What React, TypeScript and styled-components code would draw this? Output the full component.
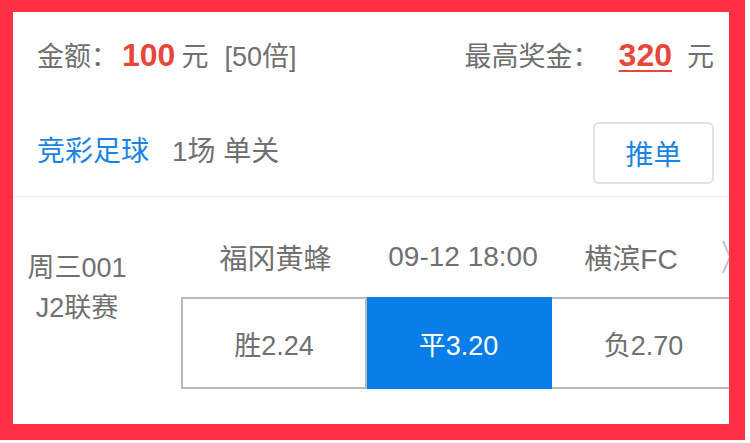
import styled, { createGlobalStyle } from "styled-components"

const GlobalStyle = createGlobalStyle`
    html, body {
        margin: 0;
        padding: 0;
        background: #f9f9f9;
    }
    body {
        font-family: "Liberation Sans", "Noto Sans CJK SC", sans-serif;
        color: #707070;
    }
`

const Frame = styled.div`
    box-sizing: border-box;
    width: 745px;
    height: 440px;
    border-style: solid;
    border-color: #ff2f44;
    border-width: 12px 16px 16px 13px;
    background: #fff;
    overflow: hidden;
`

const Card = styled.div`
    width: 716px;
    height: 412px;
    overflow: hidden;
    display: flex;
    flex-direction: column;
`

const SumRow = styled.div`
    box-sizing: border-box;
    height: 90px;
    flex: none;
    display: flex;
    align-items: center;
    justify-content: space-between;
    padding: 0 15px 6px 24px;
    font-size: 27px;
`

const Group = styled.div`
    display: flex;
    align-items: baseline;
    white-space: nowrap;
`

const Money = styled.span<{ $underline?: boolean }>`
    font-size: 32px;
    color: #e8463b;
    font-weight: 700;
    text-decoration: ${p => (p.$underline ? "underline" : "none")};
    text-underline-offset: 4px;
    text-decoration-thickness: 2px;
`

const Gap = styled.span<{ $w: number }>`
    display: inline-block;
    width: ${p => p.$w}px;
`

const TypeRow = styled.div`
    height: 94px;
    flex: none;
    display: flex;
    align-items: center;
    padding: 0 15px 0 24px;
    border-bottom: 1px solid #ececec;
    font-size: 28px;
`

const GameType = styled.span`
    color: #1c84e0;
`

const PlayType = styled.span`
    margin-left: 23px;
    flex: 1;
`

const PushButton = styled.button`
    box-sizing: border-box;
    width: 121px;
    height: 62px;
    margin-top: 8px;
    border: 2px solid #e2e2e2;
    border-radius: 6px;
    background: #fff;
    color: #1c84e0;
    font-family: inherit;
    font-size: 28px;
    padding: 0;
`

const MatchRow = styled.div`
    flex: 1;
    display: flex;
`

const MatchInfo = styled.div`
    width: 128px;
    flex: none;
    padding-top: 51px;
    text-align: center;
    font-size: 27px;
    line-height: 40px;
`

const MatchBody = styled.div`
    margin-left: 40px;
    padding-top: 40px;
    display: flex;
    flex-direction: column;
    gap: 20px;
`

const Teams = styled.div`
    display: grid;
    grid-template-columns: 189px 186px 150px auto;
    align-items: center;
    height: 40px;
    font-size: 28px;
    white-space: nowrap;
`

const Team = styled.span`
    text-align: center;
`

const Chevron = styled.svg`
    margin-left: 16px;
    display: block;
`

const Odds = styled.div`
    display: flex;
`

const OddsCell = styled.div<{ $active?: boolean; $first?: boolean }>`
    box-sizing: border-box;
    width: ${p => (p.$first ? 186 : 185)}px;
    height: 92px;
    flex: none;
    display: flex;
    align-items: center;
    justify-content: center;
    font-size: 27px;
    border: 2px solid ${p => (p.$active ? "#0a7ee8" : "#b9b9b9")};
    border-left-width: ${p => (p.$first ? 2 : 0)}px;
    background: ${p => (p.$active ? "#0a7ee8" : "#fff")};
    color: ${p => (p.$active ? "#fff" : "#707070")};
`

const odds = [
    { label: "胜2.24", active: false },
    { label: "平3.20", active: true },
    { label: "负2.70", active: false },
]

export default function App() {
    return (
        <>
            <GlobalStyle />
            <Frame>
                <Card>
                    <SumRow>
                        <Group>
                            <span>金额：</span>
                            <Gap $w={4} />
                            <Money>100</Money>
                            <Gap $w={6} />
                            <span>元</span>
                            <Gap $w={16} />
                            <span>[50倍]</span>
                        </Group>
                        <Group>
                            <span>最高奖金：</span>
                            <Gap $w={19} />
                            <Money $underline>320</Money>
                            <Gap $w={15} />
                            <span>元</span>
                        </Group>
                    </SumRow>
                    <TypeRow>
                        <GameType>竞彩足球</GameType>
                        <PlayType>1场 单关</PlayType>
                        <PushButton>推单</PushButton>
                    </TypeRow>
                    <MatchRow>
                        <MatchInfo>
                            <div>周三001</div>
                            <div>J2联赛</div>
                        </MatchInfo>
                        <MatchBody>
                            <Teams>
                                <Team>福冈黄蜂</Team>
                                <Team>09-12 18:00</Team>
                                <Team>横滨FC</Team>
                                <Chevron width="10" height="34" viewBox="0 0 10 34">
                                    <polyline points="1,1 8,17 1,33" fill="none" stroke="#c4c4c4" strokeWidth="2" />
                                </Chevron>
                            </Teams>
                            <Odds>
                                {odds.map((o, i) => (
                                    <OddsCell key={o.label} $active={o.active} $first={i === 0}>
                                        {o.label}
                                    </OddsCell>
                                ))}
                            </Odds>
                        </MatchBody>
                    </MatchRow>
                </Card>
            </Frame>
        </>
    )
}
